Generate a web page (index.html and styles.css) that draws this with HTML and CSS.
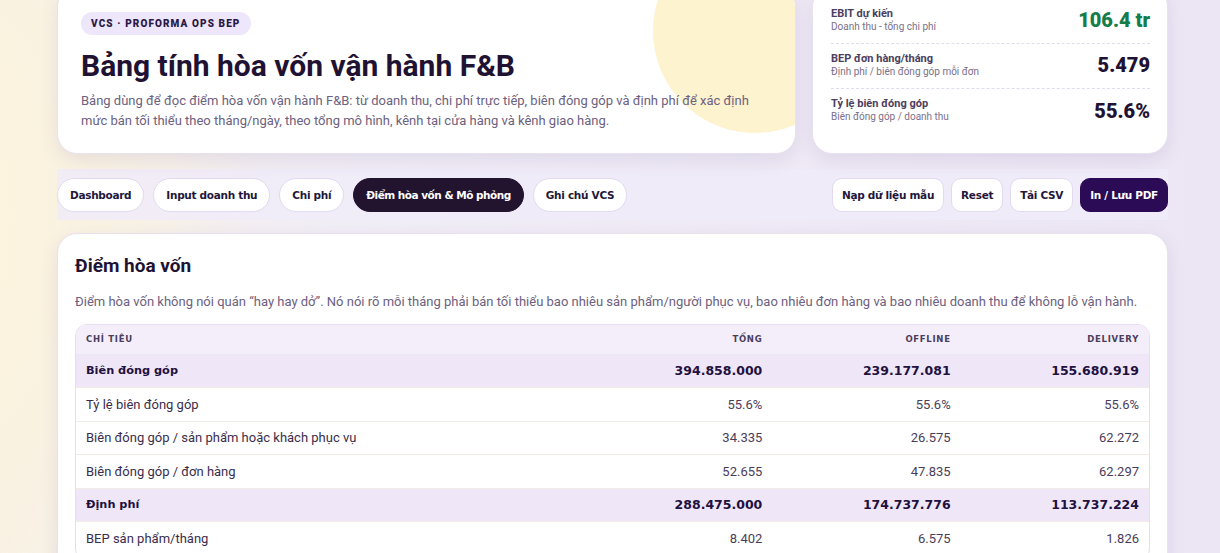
FILE: index.html
```html
<!DOCTYPE html>
<html lang="vi">
<head>
<meta charset="utf-8">
<title>Bảng tính hòa vốn vận hành F&amp;B</title>
<link rel="stylesheet" href="styles.css">
</head>
<body>
<div class="page">
  <header class="hero">
    <section class="hero-card">
      <div class="sun"></div>
      <div class="hero-content">
        <span class="badge">VCS · PROFORMA OPS BEP</span>
        <h1>Bảng tính hòa vốn vận hành F&amp;B</h1>
        <p>Bảng dùng để đọc điểm hòa vốn vận hành F&amp;B: từ doanh thu, chi phí trực tiếp, biên đóng góp và định phí để xác định mức bán tối thiểu theo tháng/ngày, theo tổng mô hình, kênh tại cửa hàng và kênh giao hàng.</p>
      </div>
    </section>
    <aside class="kpi-card">
      <div class="kpi">
        <div class="kpi-text"><div class="kpi-label">EBIT dự kiến</div><div class="kpi-sub">Doanh thu - tổng chi phí</div></div>
        <div class="kpi-value green">106.4 tr</div>
      </div>
      <div class="kpi">
        <div class="kpi-text"><div class="kpi-label">BEP đơn hàng/tháng</div><div class="kpi-sub">Định phí / biên đóng góp mỗi đơn</div></div>
        <div class="kpi-value">5.479</div>
      </div>
      <div class="kpi">
        <div class="kpi-text"><div class="kpi-label">Tỷ lệ biên đóng góp</div><div class="kpi-sub">Biên đóng góp / doanh thu</div></div>
        <div class="kpi-value">55.6%</div>
      </div>
    </aside>
  </header>

  <nav class="toolbar">
    <div class="tabs">
      <button class="tab">Dashboard</button>
      <button class="tab">Input doanh thu</button>
      <button class="tab">Chi phí</button>
      <button class="tab active">Điểm hòa vốn &amp; Mô phỏng</button>
      <button class="tab">Ghi chú VCS</button>
    </div>
    <div class="actions">
      <button class="act">Nạp dữ liệu mẫu</button>
      <button class="act">Reset</button>
      <button class="act">Tải CSV</button>
      <button class="act primary">In / Lưu PDF</button>
    </div>
  </nav>

  <main class="panel">
    <h2>Điểm hòa vốn</h2>
    <p class="lead">Điểm hòa vốn không nói quán “hay hay dở”. Nó nói rõ mỗi tháng phải bán tối thiểu bao nhiêu sản phẩm/người phục vụ, bao nhiêu đơn hàng và bao nhiêu doanh thu để không lỗ vận hành.</p>
    <div class="table-wrap">
      <table>
        <thead>
          <tr><th class="c1">Chỉ tiêu</th><th>Tổng</th><th>Offline</th><th>Delivery</th></tr>
        </thead>
        <tbody>
          <tr class="strong"><td>Biên đóng góp</td><td>394.858.000</td><td>239.177.081</td><td>155.680.919</td></tr>
          <tr><td>Tỷ lệ biên đóng góp</td><td>55.6%</td><td>55.6%</td><td>55.6%</td></tr>
          <tr><td>Biên đóng góp / sản phẩm hoặc khách phục vụ</td><td>34.335</td><td>26.575</td><td>62.272</td></tr>
          <tr><td>Biên đóng góp / đơn hàng</td><td>52.655</td><td>47.835</td><td>62.297</td></tr>
          <tr class="strong"><td>Định phí</td><td>288.475.000</td><td>174.737.776</td><td>113.737.224</td></tr>
          <tr class="last"><td>BEP sản phẩm/tháng</td><td>8.402</td><td>6.575</td><td>1.826</td></tr>
        </tbody>
      </table>
    </div>
  </main>
</div>
</body>
</html>
```

FILE: styles.css
```css
* { box-sizing: border-box; }
html, body { margin: 0; padding: 0; }
body {
  font-family: Roboto, "Noto Sans", sans-serif;
  color: #21152f;
  background:
    radial-gradient(ellipse 420px 700px at -60px 220px, #fcf4dc 0%, rgba(252,244,220,0.6) 40%, rgba(252,244,220,0) 75%),
    linear-gradient(90deg, #f6f0ea 0%, #f1edf6 30%, #ece6f4 100%);
  height: 553px;
  overflow: hidden;
}
.page {
  width: 1111px;
  margin: -14px 0 0 57px;
}
.hero {
  display: grid;
  grid-template-columns: 739px 356px;
  gap: 16px;
}
.hero-card, .kpi-card, .panel {
  background: #fff;
  border: 1px solid #e8e1f0;
  border-radius: 20px;
  box-shadow: 0 6px 18px rgba(80, 50, 130, 0.10);
}
.hero-card {
  position: relative;
  overflow: hidden;
  height: 168px;
}
.sun {
  position: absolute;
  width: 204px;
  height: 204px;
  border-radius: 50%;
  background: #fdf3cf;
  left: 595px;
  top: -58px;
}
.hero-content {
  position: relative;
  padding: 25px 24px 0 23px;
}
.badge {
  display: inline-block;
  background: #eee6fa;
  color: #2a1845;
  font-family: Roboto, sans-serif;
  font-weight: 900;
  font-size: 10px;
  letter-spacing: 1.1px;
  padding: 6px 10px;
  border-radius: 12px;
  line-height: 11px;
}
h1 {
  margin: 13px 0 7px;
  font-size: 30px;
  line-height: 36px;
  font-weight: 700;
  color: #1f1232;
  letter-spacing: 0;
}
.hero-content p {
  margin: 0;
  font-size: 13px;
  line-height: 20px;
  color: #6c6180;
  max-width: 690px;
}
.kpi-card {
  height: 168px;
  padding: 12px 17px 0 18px;
}
.kpi {
  display: flex;
  justify-content: space-between;
  align-items: center;
  height: 45px;
  border-bottom: 1px dashed #e2dbe9;
  padding-bottom: 2px;
}
.kpi:last-child { border-bottom: none; }
.kpi-label {
  font-size: 11px;
  font-weight: 700;
  color: #4b3e5e;
  line-height: 13px;
}
.kpi-sub {
  font-size: 10px;
  color: #7b7089;
  line-height: 14px;
}
.kpi-value {
  font-family: Roboto, sans-serif;
  font-size: 20px;
  font-weight: 900;
  color: #1f1232;
}
.kpi-value.green { color: #167c49; }

.toolbar {
  display: flex;
  justify-content: space-between;
  align-items: center;
  margin-top: 15px;
  height: 51px;
  background: rgba(240, 235, 248, 0.85);
  padding: 0;
}
.tabs { display: flex; gap: 9px; }
.actions { display: flex; gap: 7px; }
button {
  font-family: "DejaVu Sans", sans-serif;
  font-weight: 700;
  font-size: 10.5px;
  letter-spacing: -0.3px;
  color: #23163a;
  background: #fff;
  border: 1px solid #e2daee;
  cursor: pointer;
}
.tab {
  height: 34px;
  border-radius: 17px;
  padding: 0 12px;
}
.tab.active {
  background: #22132f;
  color: #fff;
  border-color: #22132f;
  letter-spacing: -0.5px;
}
.act {
  height: 34px;
  border-radius: 10px;
  padding: 0 9px;
}
.act.primary {
  background: #2b0b55;
  border-color: #2b0b55;
  color: #fff;
}

.panel {
  margin-top: 13px;
  padding: 20px 17px 20px 17px;
  height: 400px;
}
h2 {
  margin: 0;
  font-size: 19px;
  line-height: 24px;
  font-weight: 700;
  color: #1f1232;
}
.lead {
  margin: 15px 0 13px;
  font-size: 13px;
  line-height: 18px;
  color: #6c6180;
}
.table-wrap {
  border: 1px solid #e6def0;
  border-radius: 12px;
  overflow: hidden;
}
table {
  width: 100%;
  border-collapse: collapse;
  font-size: 13px;
}
th {
  background: #f3eefa;
  font-family: "DejaVu Sans", sans-serif;
  font-size: 8.5px;
  font-weight: 700;
  letter-spacing: 0.7px;
  text-transform: uppercase;
  color: #4a3d5c;
  text-align: right;
  height: 29px;
  padding: 0 10px;
  border-bottom: 1px solid #ece5f3;
}
th.c1 { text-align: left; width: 508px; }
td {
  height: 33.5px;
  padding: 0 10px;
  text-align: right;
  color: #4a3d5c;
  border-bottom: 1px solid #f3ece5;
}
td:first-child { text-align: left; color: #3a2d4c; }
tr.last td { height: 38px; padding-bottom: 4px; }
tr.strong td {
  background: #efe7f8;
  font-family: "DejaVu Sans", sans-serif;
  font-weight: 700;
  font-size: 12.5px;
  color: #22103f;
}
tr.strong td:first-child { font-size: 11.3px; }
```
